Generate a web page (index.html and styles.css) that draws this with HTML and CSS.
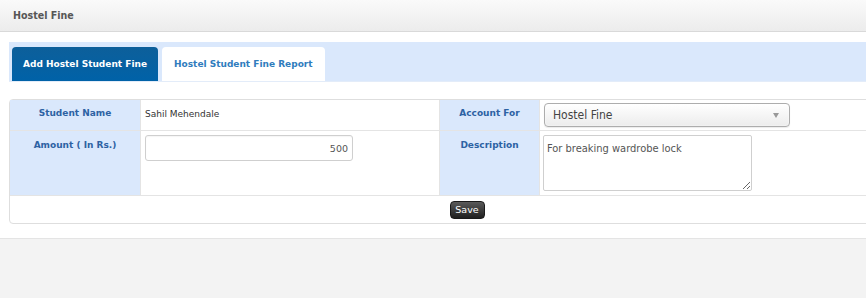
FILE: index.html
```html
<!DOCTYPE html>
<html lang="en">
<head>
<meta charset="utf-8">
<title>Hostel Fine</title>
<link rel="stylesheet" href="styles.css">
</head>
<body>
<header class="page-head">
  <h1 class="page-title">Hostel Fine</h1>
</header>
<main class="panel">
  <nav class="tabs">
    <a class="tab tab-active" href="#">Add Hostel Student Fine</a>
    <a class="tab" href="#">Hostel Student Fine Report</a>
  </nav>
  <table class="fine-form">
    <tr class="row-name">
      <td class="label col-1">Student Name</td>
      <td class="value col-2"><span class="static-text">Sahil Mehendale</span></td>
      <td class="label col-3">Account For</td>
      <td class="value col-4">
        <span class="select">Hostel Fine</span>
      </td>
    </tr>
    <tr class="row-amount">
      <td class="label col-1">Amount ( In Rs.)</td>
      <td class="value col-2"><input class="amount" type="text" value="500"></td>
      <td class="label col-3">Description</td>
      <td class="value col-4"><textarea class="desc">For breaking wardrobe lock</textarea></td>
    </tr>
    <tr class="row-actions">
      <td class="actions" colspan="4"><button class="btn-save" type="button">Save</button></td>
    </tr>
  </table>
</main>
</body>
</html>
```
FILE: styles.css
```css
html, body {
  margin: 0;
  padding: 0;
}
body {
  background: #f3f3f3;
  font-family: "DejaVu Sans", Verdana, sans-serif;
  font-size: 9px;
  overflow: hidden;
  width: 866px;
  height: 298px;
}
.page-head {
  height: 31px;
  background: linear-gradient(#fafafa, #ececec);
  border-bottom: 1px solid #d9d9d9;
  display: flex;
  align-items: center;
  padding-left: 13px;
}
.page-title {
  margin: 0 0 1px 0;
  font-family: "DejaVu Sans Condensed", "DejaVu Sans", sans-serif;
  font-weight: bold;
  font-size: 10.6px;
  color: #575757;
}
.panel {
  display: block;
  background: #fff;
  padding: 10px 0 14px 9px;
  border-bottom: 1px solid #e4e4e4;
  overflow: hidden;
}
.tabs {
  display: flex;
  gap: 4px;
  width: 913px;
  padding: 5px 0 0 3px;
  background: #dae8fc;
  border-bottom: 1px solid #e3ecf9;
}
.tab {
  display: block;
  height: 34px;
  line-height: 34px;
  padding: 0 12px;
  border-radius: 4px 4px 0 0;
  background: #fff;
  color: #2f7cbd;
  font-weight: bold;
  font-size: 9px;
  text-decoration: none;
}
.tab-active {
  background: linear-gradient(#0d5f9a, #0062a8);
  color: #fff;
  padding: 0 11px 0 11px;
}
.fine-form {
  margin-top: 17px;
  width: 916px;
  border-collapse: separate;
  border-spacing: 0;
  border: 1px solid #dedede;
  border-radius: 4px;
  table-layout: fixed;
}
.fine-form td {
  box-sizing: border-box;
  padding: 0;
  vertical-align: top;
  border-bottom: 1px solid #e4e4e4;
}
.fine-form td.label,
.fine-form td.col-2 {
  border-right: 1px solid #e4e4e4;
}
.row-actions td {
  border-bottom: none !important;
}
.label {
  background: #dae8fc;
  color: #2d62a3;
  font-weight: bold;
  text-align: center;
  line-height: 12px;
}
.col-1 { width: 131px; }
.col-2 { width: 299px; }
.col-3 { width: 100px; }
.row-name .label { padding-top: 7px !important; }
.row-amount .label { padding-top: 8px !important; }
.row-name .value {
  padding: 3px 4px 3px 4px;
}
.row-name .col-2 {
  padding: 8px 4px 0 4px;
}
.static-text {
  color: #333;
  line-height: 12px;
}
.select {
  position: relative;
  display: block;
  box-sizing: border-box;
  width: 246px;
  height: 24px;
  line-height: 22px;
  padding-left: 8px;
  border: 1px solid #adadad;
  border-radius: 4px;
  background: linear-gradient(#ffffff, #ececec);
  box-shadow: inset 0 0 2px #fff, 0 1px 1px rgba(0,0,0,0.08);
  font-family: "DejaVu Sans Condensed", "DejaVu Sans", sans-serif;
  font-size: 12px;
  color: #444;
}
.select::after {
  content: "";
  position: absolute;
  right: 10px;
  top: 9px;
  border-left: 3px solid transparent;
  border-right: 3px solid transparent;
  border-top: 5px solid #999;
}
.row-amount .value {
  padding: 4px 4px 3px 4px;
  height: 65px;
}
.row-amount .col-4 { padding-left: 3px; }
.amount {
  display: block;
  box-sizing: border-box;
  width: 208px;
  height: 26px;
  margin: 0;
  padding: 0 4px;
  border: 1px solid #cfcfcf;
  border-radius: 3px;
  text-align: right;
  font-family: "DejaVu Sans", sans-serif;
  font-size: 9.5px;
  color: #555;
  background: #fff;
  box-shadow: inset 0 1px 1px rgba(0,0,0,0.04);
}
.desc {
  display: block;
  box-sizing: border-box;
  width: 209px;
  height: 56px;
  margin: 0;
  padding: 6px 3px;
  border: 1px solid #cfcfcf;
  border-radius: 2px;
  font-family: "DejaVu Sans Condensed", "DejaVu Sans", sans-serif;
  font-size: 11px;
  line-height: 14px;
  color: #555;
  resize: both;
}
.actions {
  text-align: center;
  padding: 5px 0 4px 0 !important;
}
.btn-save {
  display: inline-block;
  box-sizing: border-box;
  height: 18px;
  width: 35px;
  padding: 0;
  margin: 0;
  border: 1px solid #1a1a1a;
  border-radius: 4px;
  background: linear-gradient(#5a5a5a, #1f1f1f);
  color: #fff;
  font-family: "DejaVu Sans", sans-serif;
  font-size: 9.5px;
  line-height: 16px;
  vertical-align: top;
}
```
